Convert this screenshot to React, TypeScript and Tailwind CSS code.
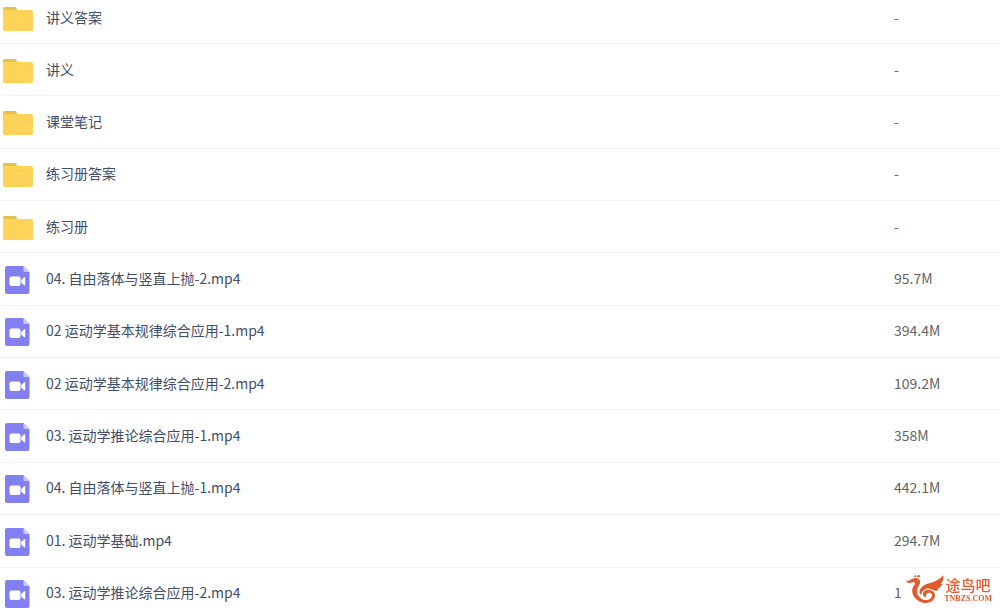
import React from 'react';

type FileItem = {
  kind: 'folder' | 'video';
  name: string;
  size: string;
};

const files: FileItem[] = [
  { kind: 'folder', name: '讲义答案', size: '-' },
  { kind: 'folder', name: '讲义', size: '-' },
  { kind: 'folder', name: '课堂笔记', size: '-' },
  { kind: 'folder', name: '练习册答案', size: '-' },
  { kind: 'folder', name: '练习册', size: '-' },
  { kind: 'video', name: '04. 自由落体与竖直上抛-2.mp4', size: '95.7M' },
  { kind: 'video', name: '02 运动学基本规律综合应用-1.mp4', size: '394.4M' },
  { kind: 'video', name: '02 运动学基本规律综合应用-2.mp4', size: '109.2M' },
  { kind: 'video', name: '03. 运动学推论综合应用-1.mp4', size: '358M' },
  { kind: 'video', name: '04. 自由落体与竖直上抛-1.mp4', size: '442.1M' },
  { kind: 'video', name: '01. 运动学基础.mp4', size: '294.7M' },
  { kind: 'video', name: '03. 运动学推论综合应用-2.mp4', size: '1' },
];

const FolderIcon = () => (
  <svg viewBox="0 0 30 26" className="w-[30px] h-[26px]" aria-hidden="true">
    <path d="M0 8V2.5Q0 1 1.5 1H12Q13.5 1 13.8 2.5V8Z" fill="#e6c04d" />
    <path d="M0 4H28.5Q30 4 30 5.5V23.5Q30 25 28.5 25H1.5Q0 25 0 23.5Z" fill="#ffd359" />
  </svg>
);

const VideoIcon = () => (
  <svg viewBox="0 0 26 28" className="w-[26px] h-[28px] ml-0.5" aria-hidden="true">
    <path d="M2 0H18.5L24.5 6V26Q24.5 28 22.5 28H2Q0 28 0 26V2Q0 0 2 0Z" fill="#8280f0" />
    <path d="M18.5 0L24.5 6H20Q18.5 6 18.5 4.5Z" fill="#c9c8fa" />
    <rect x="4.5" y="10.5" width="11" height="9.5" rx="2" fill="#fff" />
    <path d="M16.2 14L19.2 11.2Q20.2 10.6 20.2 12V18.5Q20.2 19.9 19.2 19.3L16.2 16.6Z" fill="#fff" />
  </svg>
);

const Watermark = () => (
  <div className="fixed right-2 bottom-1 flex items-center text-[#e4592b]">
    <svg viewBox="76 36 118 92" className="w-[39px] h-[31px]" fill="currentColor" aria-hidden="true">
      {/* crest */}
      <circle cx="107" cy="45" r="3" />
      <circle cx="117" cy="45" r="4" />
      {/* head, neck and belly */}
      <path d="M78 58Q87 61 94 55Q103 48 113 51Q124 55 121 67Q118 74 114 81Q109 95 118 106Q127 117 141 117Q153 116 157 107Q160 97 151 95Q143 94 140 100Q138 105 142 109Q130 108 130 98Q132 86 148 86Q167 89 167 105Q163 124 141 126Q117 126 103 106Q93 91 101 77Q107 70 106 65Q103 60 96 64Q85 69 78 58Z" />
      {/* wing */}
      <path d="M120 88Q128 70 149 66Q175 61 192 42Q194 58 184 68Q188 69 190 67Q185 79 173 83Q176 85 179 84Q172 91 164 88Q155 81 143 82Q128 86 124 102Q118 96 120 88Z" />
    </svg>
    <div className="flex flex-col items-center">
      <span className="text-[15px] leading-5 font-medium">途鸟吧</span>
      <span className="font-['Liberation_Serif',serif] text-[8px] leading-2 font-bold">TNBZS.COM</span>
    </div>
  </div>
);

const App = () => {
  return (
    <div className="h-screen overflow-hidden bg-white font-['Noto_Sans_CJK_SC',sans-serif] text-sm">
      {/* the list is scrolled slightly past its first row */}
      <table className="w-full h-[628px] -mt-2 table-fixed border-collapse">
        <tbody>
          {files.map((file) => (
            <tr key={file.name} className="border-b border-[#f2f4f7]">
              <td className="p-0 pl-[3px]">
                <div className="flex h-8 items-center">
                  <span className="w-[43px] shrink-0 pt-0.5">
                    {file.kind === 'folder' ? <FolderIcon /> : <VideoIcon />}
                  </span>
                  <a href="#" className="truncate pb-0.5 text-[#424e67]">
                    {file.name}
                  </a>
                </div>
              </td>
              <td className="w-[106px] p-0 pb-0.5 text-[#636363]">{file.size}</td>
            </tr>
          ))}
        </tbody>
      </table>
      <Watermark />
    </div>
  );
};

export default App;
